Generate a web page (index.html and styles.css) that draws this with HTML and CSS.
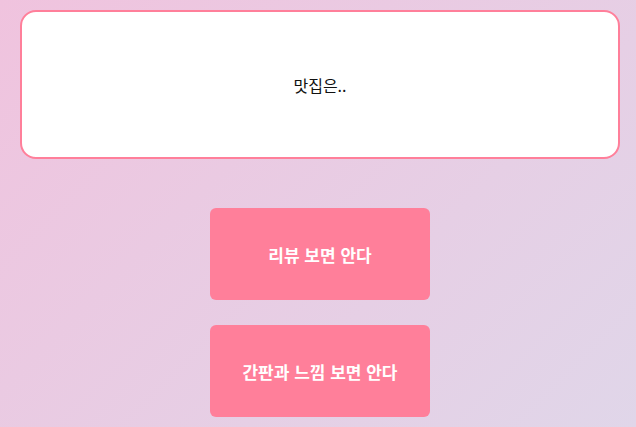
FILE: index.html
```html
<!DOCTYPE html>
<html lang="ko">
<head>
  <meta charset="UTF-8">
  <meta name="viewport" content="width=device-width, initial-scale=1.0">
  <title>맛집 고르기</title>
  <link rel="stylesheet" href="styles.css">
</head>
<body>

  <div class="quiz-container">
    <div class="question-box" id="questionBox">맛집은..</div>

    <div class="answer-list">
      <button class="answer-btn">리뷰 보면 안다</button>
      <button class="answer-btn">간판과 느낌 보면 안다</button>
    </div>
  </div>

</body>
</html>
```

FILE: styles.css
```css
html {
  min-height: 100%;
  background: linear-gradient(135deg, #f0c3de 0%, #e0d6e9 100%);
}

body {
  font-family: "Noto Sans CJK KR", "Noto Sans", sans-serif;
  margin: 0;
  padding: 10px 16px 10px 20px;
}

.quiz-container {
  width: 600px;
}

.question-box {
  height: 145px;
  display: flex;
  align-items: center;
  justify-content: center;
  background-color: #fff;
  border: 2px solid #ff7f9a;
  border-radius: 16px;
  font-size: 16px;
  color: #111;
}

.answer-list {
  display: flex;
  flex-direction: column;
  align-items: center;
  gap: 25px;
  margin-top: 49px;
}

.answer-btn {
  width: 220px;
  height: 92px;
  background-color: #ff7f9a;
  color: #fff;
  border: none;
  border-radius: 6px;
  font-family: inherit;
  font-size: 17px;
  font-weight: bold;
  cursor: pointer;
}
```
